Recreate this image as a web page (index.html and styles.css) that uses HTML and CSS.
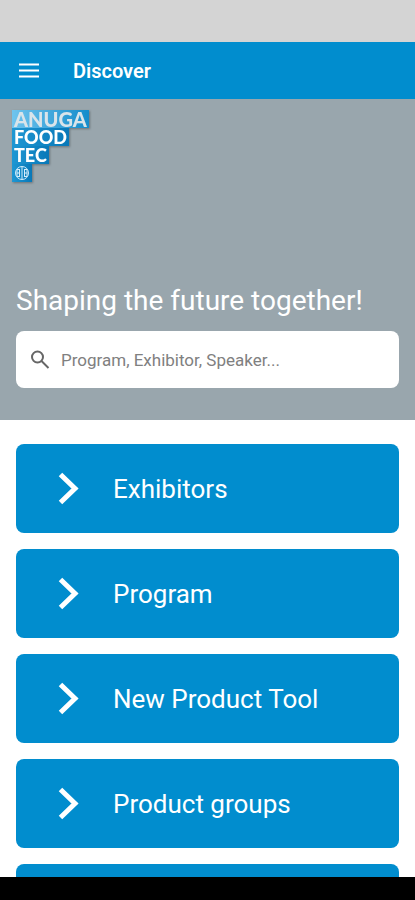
FILE: index.html
```html
<!DOCTYPE html>
<html lang="en">
<head>
    <meta charset="UTF-8">
    <meta name="viewport" content="width=device-width, initial-scale=1.0">
    <title>Discover</title>
    <link rel="stylesheet" href="styles.css">
</head>
<body>
    <div class="status-bar"></div>

    <header class="app-bar">
        <button class="menu-button" type="button" aria-label="Menu">
            <svg width="24" height="24" viewBox="0 0 24 24">
                <path d="M2 5.5h20M2 11.5h20M2 17.5h20" stroke="currentColor" stroke-width="2.2"/>
            </svg>
        </button>
        <h1>Discover</h1>
    </header>

    <main>
        <section class="hero">
            <!-- Logo -->
            <div class="logo">
                <span class="logo-line logo-light">ANUGA</span>
                <span class="logo-line">FOOD</span>
                <span class="logo-line">TEC</span>
                <span class="logo-line">
                    <svg width="16" height="16" viewBox="0 0 16 16" fill="none" stroke="#d5eefb">
                        <circle cx="8" cy="8" r="6.5"/>
                        <path d="M5.5 4v8M8 2v12M10.5 4v8M3 5v6M13 5v6M3 8h2.5M10.5 8H13M3 4.5h3M10 4.5h3M3 11.5h3M10 11.5h3"/>
                    </svg>
                </span>
            </div>

            <div class="hero-search">
                <h2>Shaping the future together!</h2>
                <label class="search-box">
                    <svg width="24" height="24" viewBox="0 0 24 24" fill="none" stroke="#666" stroke-width="2">
                        <circle cx="9.5" cy="9" r="5.5"/>
                        <path d="M13.5 13l7 7"/>
                    </svg>
                    <input type="search" placeholder="Program, Exhibitor, Speaker..." aria-label="Search">
                </label>
            </div>
        </section>

        <!-- Main entries -->
        <nav class="entries">
            <a class="entry" href="#exhibitors">
                <svg width="24" height="36" viewBox="0 0 24 36"><path d="M3.5 3.5L18 17.5l-14.5 14"/></svg>
                Exhibitors
            </a>
            <a class="entry" href="#program">
                <svg width="24" height="36" viewBox="0 0 24 36"><path d="M3.5 3.5L18 17.5l-14.5 14"/></svg>
                Program
            </a>
            <a class="entry" href="#new-product-tool">
                <svg width="24" height="36" viewBox="0 0 24 36"><path d="M3.5 3.5L18 17.5l-14.5 14"/></svg>
                New Product Tool
            </a>
            <a class="entry" href="#product-groups">
                <svg width="24" height="36" viewBox="0 0 24 36"><path d="M3.5 3.5L18 17.5l-14.5 14"/></svg>
                Product groups
            </a>
            <a class="entry" href="#more" aria-label="More"></a>
        </nav>
    </main>

    <div class="nav-bar"></div>
</body>
</html>
```
FILE: styles.css
```css
* {
    box-sizing: border-box;
}
body {
    margin: 0;
    height: 100vh;
    display: flex;
    flex-direction: column;
    font-family: Roboto, "Liberation Sans", sans-serif;
    background-color: #fff;
}
h1, h2 {
    margin: 0;
}
.status-bar {
    flex: none;
    height: 42px;
    background-color: #d4d4d4;
}
/* App bar */
.app-bar {
    flex: none;
    display: flex;
    align-items: center;
    gap: 32px;
    height: 57px;
    padding: 0 17px;
    background-color: #018dce;
    color: #fff;
}
.app-bar h1 {
    font-size: 20px;
    line-height: 24px;
    font-weight: 600;
}
.menu-button {
    display: flex;
    padding: 0;
    border: none;
    background: none;
    color: #fff;
    cursor: pointer;
}
main {
    flex: 1;
    min-height: 0;
    overflow-y: auto;
    scrollbar-width: none;
}
/* Hero */
.hero {
    display: flex;
    flex-direction: column;
    justify-content: space-between;
    min-height: 321px;
    padding: 11px 16px 32px 12px;
    background-color: #99a6ad;
}
.logo {
    display: flex;
    flex-direction: column;
    align-items: flex-start;
    filter: drop-shadow(1px 1px 1px rgba(0, 0, 0, 0.3));
}
.logo-line {
    display: flex;
    align-items: center;
    height: 18px;
    padding: 0 2px;
    background: linear-gradient(90deg, #1f97d3, #0878b8);
    color: #fff;
    font-family: Lato, sans-serif;
    font-size: 18px;
    line-height: 18px;
    font-weight: 900;
}
.logo-light {
    background: linear-gradient(90deg, #6fc4ee, #148ccb);
    color: #d9e4ea;
    font-size: 20px;
}
.hero-search {
    padding-left: 4px;
}
.hero h2 {
    margin-bottom: 14px;
    color: #fff;
    font-size: 28px;
    line-height: 32px;
    font-weight: 400;
}
.search-box {
    display: flex;
    align-items: center;
    gap: 9px;
    height: 57px;
    padding: 0 12px;
    border-radius: 8px;
    background-color: #fff;
}
.search-box input {
    flex: 1;
    min-width: 0;
    padding: 0;
    border: none;
    outline: none;
    background: none;
    color: #333;
    font-family: inherit;
    font-size: 17px;
}
.search-box input::placeholder {
    color: #808080;
}
/* Entries */
.entries {
    display: flex;
    flex-direction: column;
    gap: 16px;
    padding: 24px 16px;
}
.entry {
    display: flex;
    align-items: center;
    gap: 32px;
    height: 89px;
    padding: 0 41px;
    border-radius: 8px;
    background-color: #018dce;
    color: #fff;
    font-size: 26px;
    text-decoration: none;
}
.entry svg {
    fill: none;
    stroke: #fff;
    stroke-width: 5;
}
/* System navigation */
.nav-bar {
    flex: none;
    height: 23px;
    background-color: #000;
}
```
